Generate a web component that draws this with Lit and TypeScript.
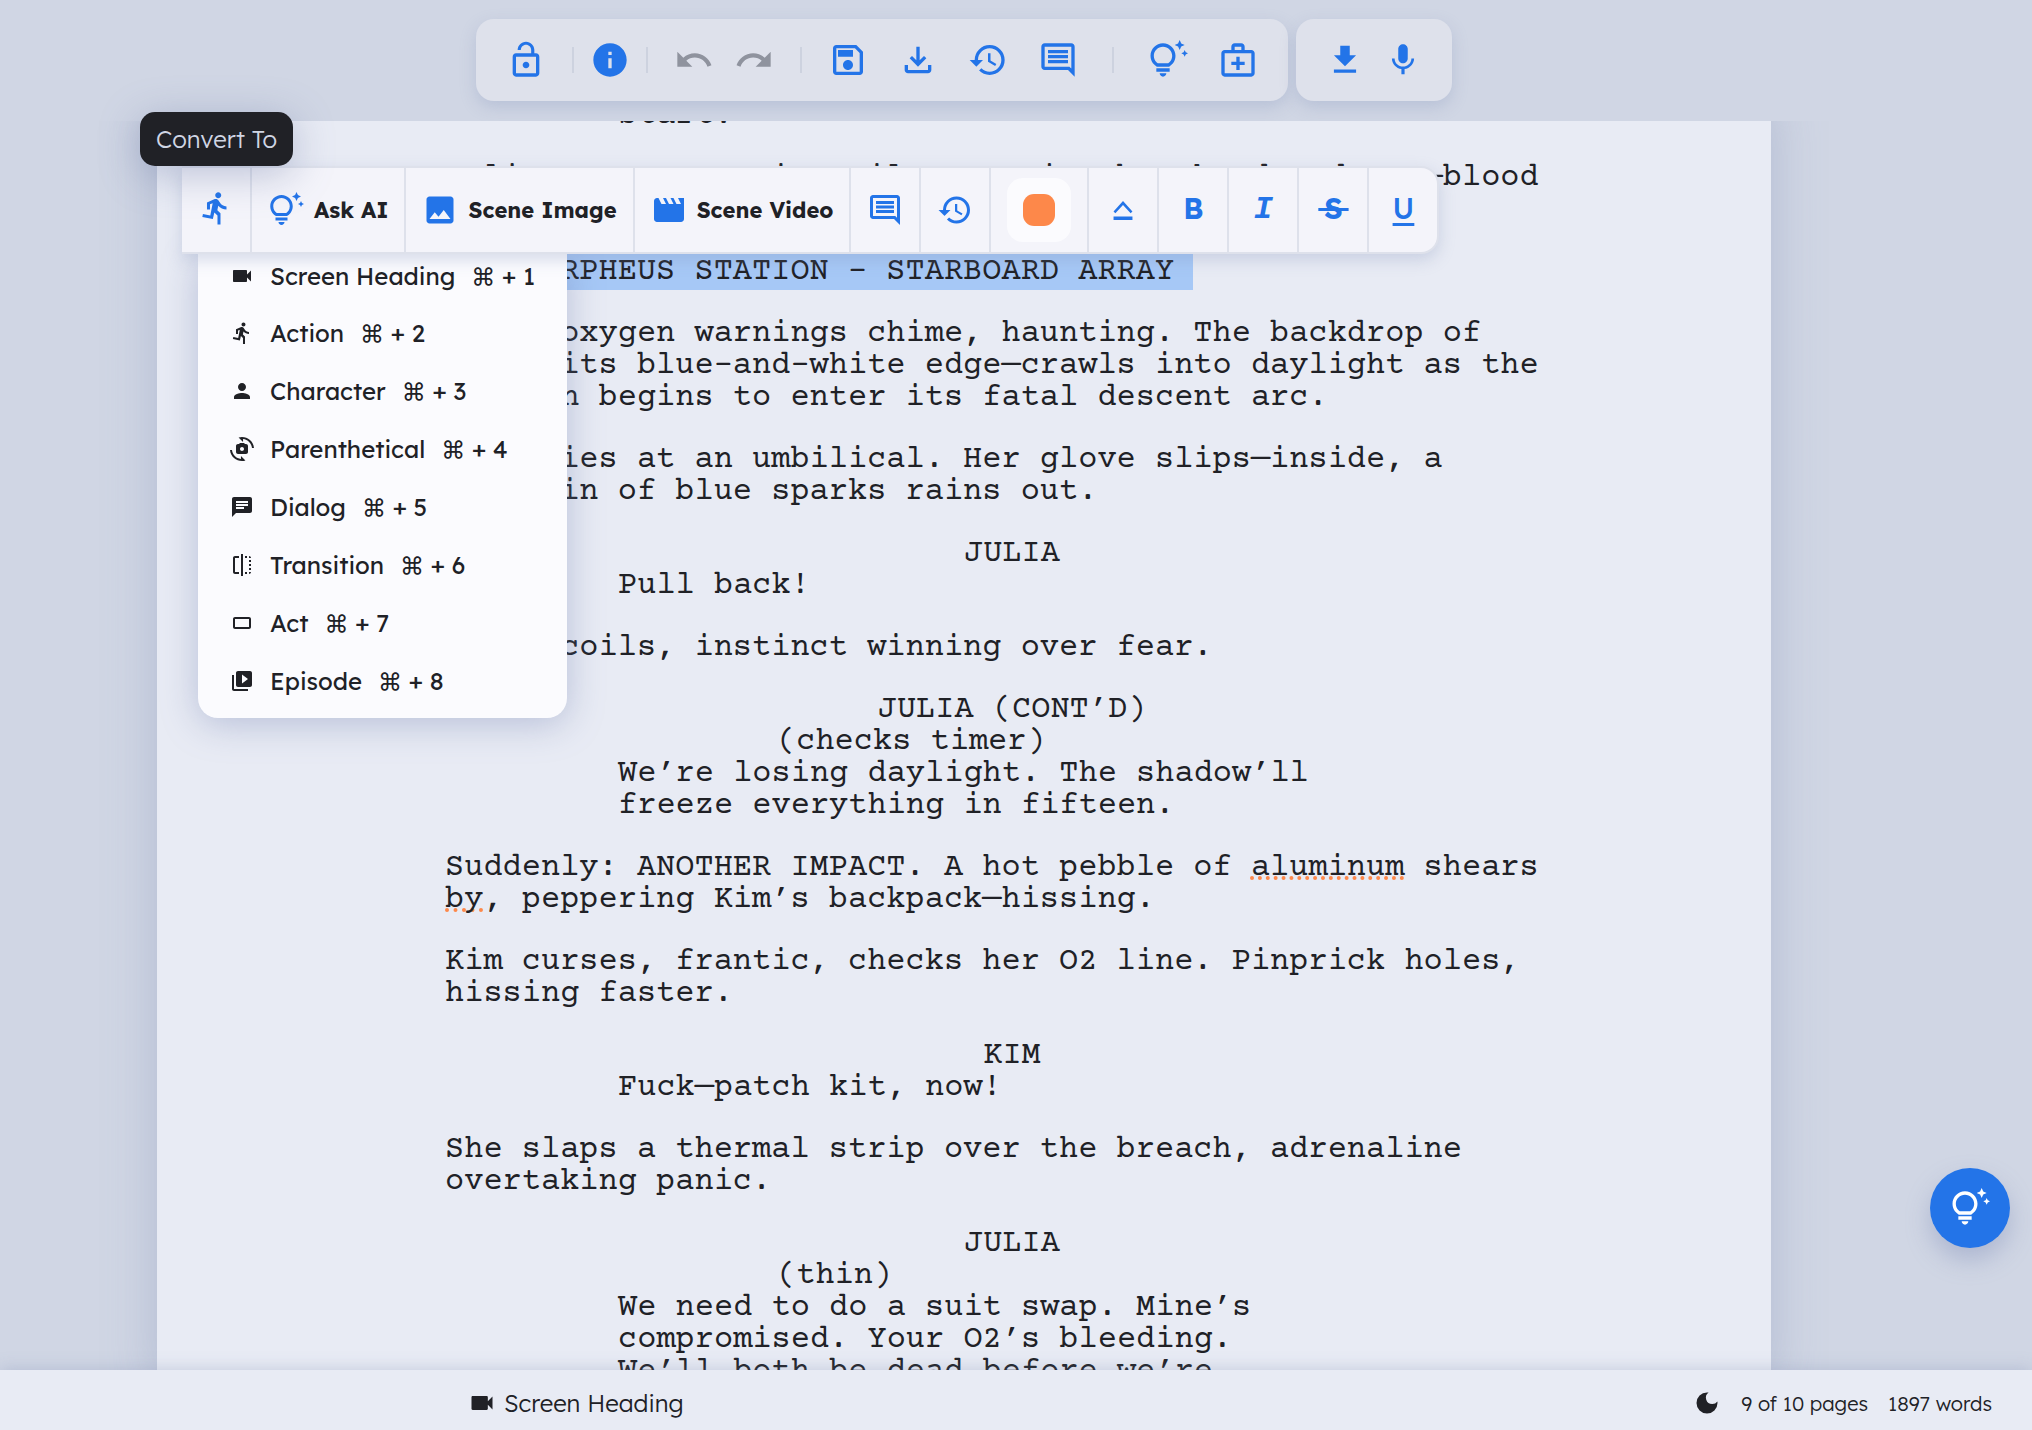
import { LitElement, html, css, svg, nothing } from "lit";
import { customElement, property, state } from "lit/decorators.js";

const ICONS: Record<string, string> = {
  lock: "M12 17c1.1 0 2-.9 2-2s-.9-2-2-2-2 .9-2 2 .9 2 2 2zm6-9h-1V6c0-2.76-2.24-5-5-5S7 3.24 7 6h1.9c0-1.71 1.39-3.1 3.1-3.1 1.71 0 3.1 1.39 3.1 3.1v2H6c-1.1 0-2 .9-2 2v10c0 1.1.9 2 2 2h12c1.1 0 2-.9 2-2V10c0-1.1-.9-2-2-2zm0 12H6V10h12v10z",
  info: "M12 2C6.48 2 2 6.48 2 12s4.48 10 10 10 10-4.48 10-10S17.52 2 12 2zm1 15h-2v-6h2v6zm0-8h-2V7h2v2z",
  undo: "M12.5 8c-2.65 0-5.05.99-6.9 2.6L2 7v9h9l-3.62-3.62c1.39-1.16 3.16-1.88 5.12-1.88 3.54 0 6.55 2.31 7.6 5.5l2.37-.78C21.08 11.03 17.15 8 12.5 8z",
  redo: "M18.4 10.6C16.55 8.99 14.15 8 11.5 8c-4.65 0-8.58 3.03-9.96 7.22L3.9 16c1.05-3.19 4.05-5.5 7.6-5.5 1.95 0 3.73.72 5.12 1.88L13 16h9V7l-3.6 3.6z",
  save: "M17 3H5c-1.11 0-2 .9-2 2v14c0 1.1.89 2 2 2h14c1.1 0 2-.9 2-2V7l-4-4zm2 16H5V5h11.17L19 7.83V19zm-7-7c-1.66 0-3 1.34-3 3s1.34 3 3 3 3-1.34 3-3-1.34-3-3-3zM6 6h9v4H6z",
  tray: "M12 16l-5-5 1.4-1.45 2.6 2.6V4h2v8.15l2.6-2.6L17 11l-5 5zM6 20c-.55 0-1.02-.2-1.41-.59C4.2 19.02 4 18.55 4 18v-3h2v3h12v-3h2v3c0 .55-.2 1.02-.59 1.41-.39.39-.86.59-1.41.59H6z",
  history: "M13 3a9 9 0 0 0-9 9H1l3.89 3.89.07.14L9 12H6c0-3.87 3.13-7 7-7s7 3.13 7 7-3.13 7-7 7c-1.93 0-3.68-.79-4.94-2.06l-1.42 1.42C8.27 19.99 10.51 21 13 21a9 9 0 0 0 0-18zm-1 5v5l4.28 2.54.72-1.21-3.5-2.08V8H12z",
  comment: "M21.99 4c0-1.1-.89-2-1.99-2H4c-1.1 0-2 .9-2 2v12c0 1.1.9 2 2 2h14l4 4-.01-18zM20 4v13.17L18.83 16H4V4h16zM6 12h12v2H6zm0-3h12v2H6zm0-3h12v2H6z",
  bulb: "M7 20h4c0 1.1-.9 2-2 2s-2-.9-2-2zm-2-1h8v-2H5v2zm11.5-9.5c0 3.82-2.66 5.86-3.77 6.5H5.27c-1.11-.64-3.77-2.68-3.77-6.5C1.5 5.36 4.86 2 9 2s7.5 3.36 7.5 7.5zm-2 0C14.5 6.47 12.03 4 9 4S3.5 6.47 3.5 9.5c0 2.47 1.49 3.89 2.35 4.5h6.3c.86-.61 2.35-2.03 2.35-4.5zm6.87-2.13L20 8l1.37.63L22 10l.63-1.37L24 8l-1.37-.63L22 6l-.63 1.37zM19 6l.94-2.06L22 3l-2.06-.94L19 0l-.94 2.06L16 3l2.06.94L19 6z",
  kit: "M20 6h-4V4c0-1.1-.9-2-2-2h-4c-1.1 0-2 .9-2 2v2H4c-1.1 0-2 .9-2 2v12c0 1.1.9 2 2 2h16c1.1 0 2-.9 2-2V8c0-1.1-.9-2-2-2zM10 4h4v2h-4V4zm10 16H4V8h16v12zM13 10h-2v3H8v2h3v3h2v-3h3v-2h-3z",
  download: "M19 9h-4V3H9v6H5l7 7 7-7zM5 18v2h14v-2H5z",
  mic: "M12 14c1.66 0 2.99-1.34 2.99-3L15 5c0-1.66-1.34-3-3-3S9 3.34 9 5v6c0 1.66 1.34 3 3 3zm5.3-3c0 3-2.54 5.1-5.3 5.1S6.7 14 6.7 11H5c0 3.41 2.72 6.23 6 6.72V21h2v-3.28c3.28-.48 6-3.3 6-6.72h-1.7z",
  run: "M13.49 5.48c1.1 0 2-.9 2-2s-.9-2-2-2-2 .9-2 2 .9 2 2 2zm-3.6 13.9l1-4.4 2.1 2v6h2v-7.5l-2.1-2 .6-3c1.3 1.5 3.3 2.5 5.5 2.5v-2c-1.9 0-3.5-1-4.3-2.4l-1-1.6c-.4-.6-1-1-1.7-1-.3 0-.5.1-.8.1l-5.2 2.2v4.7h2v-3.4l1.8-.7-1.6 8.1-4.9-1-.4 2 7 1.4z",
  image: "M21 19V5c0-1.1-.9-2-2-2H5c-1.1 0-2 .9-2 2v14c0 1.1.9 2 2 2h14c1.1 0 2-.9 2-2zM8.5 13.5l2.5 3.01L14.5 12l4.5 6H5l3.5-4.5z",
  movie: "M18 4l2 4h-3l-2-4h-2l2 4h-3l-2-4H8l2 4H7L5 4H4c-1.1 0-1.99.9-1.99 2L2 18c0 1.1.9 2 2 2h16c1.1 0 2-.9 2-2V4h-4z",
  caret: "M6.9 14.2L5.7 13l6.3-7 6.3 7-1.2 1.2L12 8.6zM5.7 16.4h12.6v2.2H5.7z",
  camera: "M17 10.5V7c0-.55-.45-1-1-1H4c-.55 0-1 .45-1 1v10c0 .55.45 1 1 1h12c.55 0 1-.45 1-1v-3.5l4 4v-11l-4 4z",
  person: "M12 12c2.21 0 4-1.79 4-4s-1.79-4-4-4-4 1.79-4 4 1.79 4 4 4zm0 2c-2.67 0-8 1.34-8 4v2h16v-2c0-2.66-5.33-4-8-4z",
  switch: "M16 7h-1l-1-1h-4L9 7H8c-1.1 0-2 .9-2 2v6c0 1.1.9 2 2 2h8c1.1 0 2-.9 2-2V9c0-1.1-.9-2-2-2zm-4 7c-1.1 0-2-.9-2-2s.9-2 2-2 2 .9 2 2-.9 2-2 2zM8.57.51l4.48 4.48V2.04c4.72.47 8.48 4.23 8.95 8.95h2C23.34 3.02 15.49-1.59 8.57.51zM10.95 21.96C6.23 21.49 2.47 17.73 2 13.01H0c.66 7.97 8.51 12.58 15.43 10.48l-4.48-4.48v2.95z",
  chat: "M20 2H4c-1.1 0-1.99.9-1.99 2L2 22l4-4h14c1.1 0 2-.9 2-2V4c0-1.1-.9-2-2-2zM6 9h12v2H6V9zm8 5H6v-2h8v2zm4-6H6V6h12v2z",
  flip: "M15 21h2v-2h-2v2zm4-12h2V7h-2v2zM3 5v14c0 1.1.9 2 2 2h4v-2H5V5h4V3H5c-1.1 0-2 .9-2 2zm16-2v2h2c0-1.1-.9-2-2-2zm-8 20h2V1h-2v22zm8-6h2v-2h-2v2zM15 5h2V3h-2v2zm4 8h2v-2h-2v2zm0 8c1.1 0 2-.9 2-2h-2v2z",
  frame: "M19 6H5c-1.1 0-2 .9-2 2v8c0 1.1.9 2 2 2h14c1.1 0 2-.9 2-2V8c0-1.1-.9-2-2-2zm0 10H5V8h14v8z",
  episode: "M4 6H2v14c0 1.1.9 2 2 2h14v-2H4V6zm16-4H8c-1.1 0-2 .9-2 2v12c0 1.1.9 2 2 2h12c1.1 0 2-.9 2-2V4c0-1.1-.9-2-2-2zm-8 12.5v-9l6 4.5-6 4.5z",
  moon: "M12 3a9 9 0 1 0 9 9c0-.46-.04-.92-.1-1.36a5.39 5.39 0 0 1-4.4 2.26 5.4 5.4 0 0 1-3.14-9.8c-.44-.06-.9-.1-1.36-.1z",
};

@customElement("ui-icon")
export class UiIcon extends LitElement {
  @property() name = "";
  static styles = css`
    :host { display: block; flex: none; width: var(--icon-size, 24px); height: var(--icon-size, 24px); }
    svg { display: block; width: 100%; height: 100%; fill: currentColor; fill-rule: evenodd; }
  `;
  render() {
    return html`<svg viewBox="0 0 24 24" aria-hidden="true">${svg`<path d=${ICONS[this.name] ?? ""}></path>`}</svg>`;
  }
}

@customElement("top-bar")
export class TopBar extends LitElement {
  static styles = css`
    :host { display: flex; justify-content: center; gap: 8px; }
    .group {
      display: flex; align-items: center; height: 82px; padding: 0 15px; box-sizing: border-box;
      border-radius: 18px; background: #dee1eb; box-shadow: 0 6px 16px rgba(130, 145, 185, 0.3);
      --icon-size: 40px;
    }
    .group.side { padding: 0 20px; --icon-size: 38px; }
    .history { display: flex; padding: 0 5px; }
    button {
      display: flex; align-items: center; justify-content: center; width: 70px; height: 60px;
      padding: 0; border: 0; background: none; color: #2374e8; cursor: pointer;
    }
    button.mid { width: 60px; }
    button.near { width: 58px; }
    button.tight { width: 50px; }
    button:disabled { color: #8f939e; }
    .sep { width: 2px; height: 26px; margin: 0 11px; background: #cdd2df; }
    .sep.wide { margin: 0 19px; }
  `;
  private btn(icon: string, label: string, cls = "", disabled = false) {
    return html`<button class=${cls} aria-label=${label} ?disabled=${disabled}><ui-icon name=${icon}></ui-icon></button>`;
  }
  render() {
    return html`
      <div class="group" role="toolbar" aria-label="Document">
        ${this.btn("lock", "Unlock")}
        <span class="sep"></span>
        ${this.btn("info", "Info", "tight")}
        <span class="sep"></span>
        <div class="history">${this.btn("undo", "Undo", "mid", true)}${this.btn("redo", "Redo", "mid", true)}</div>
        <span class="sep"></span>
        ${this.btn("save", "Save")}${this.btn("tray", "Import")}${this.btn("history", "History")}${this.btn("comment", "Comments")}
        <span class="sep wide"></span>
        ${this.btn("bulb", "Ideas")}${this.btn("kit", "Script doctor")}
      </div>
      <div class="group side" role="toolbar" aria-label="Output">
        ${this.btn("download", "Download", "near")}${this.btn("mic", "Dictate", "near")}
      </div>
    `;
  }
}

const KINDS: [string, string][] = [
  ["camera", "Screen Heading"],
  ["run", "Action"],
  ["person", "Character"],
  ["switch", "Parenthetical"],
  ["chat", "Dialog"],
  ["flip", "Transition"],
  ["frame", "Act"],
  ["episode", "Episode"],
];

@customElement("format-bar")
export class FormatBar extends LitElement {
  @state() private open = true;
  static styles = css`
    :host { display: block; font-family: Lexend, Inter, "Open Sans", sans-serif; }
    .bar {
      position: relative; z-index: 2; display: flex; height: 84px; border: 2px solid #dee1eb;
      border-left: 0; border-radius: 0 18px 18px 0;
      background: #f4f4fa; box-shadow: 0 6px 16px rgba(130, 145, 185, 0.3); --icon-size: 36px;
    }
    button { font: inherit; cursor: pointer; border: 0; background: none; }
    .cell {
      display: flex; align-items: center; justify-content: center; gap: 10px; padding: 0 16px;
      border-right: 2px solid #dee1eb; color: #2374e8;
    }
    .cell.raised { padding-bottom: 4px; }
    .cell:last-child { border-right: 0; }
    .label { color: #202126; font-size: 22px; font-weight: 700; white-space: nowrap; }
    .chip { display: flex; padding: 16px; border-radius: 16px; background: #fbfbfe; }
    .dot { width: 32px; height: 32px; border-radius: 11px; background: #fd884a; }
    .glyph { width: 36px; font-size: 29px; line-height: 36px; font-weight: 700; text-align: center; white-space: nowrap; }
    .italic { font-family: "Liberation Mono", monospace; font-style: italic; font-size: 32px; }
    .strike { text-decoration: line-through; text-decoration-thickness: 3px; }
    .under { font-weight: 500; text-decoration: underline; text-decoration-thickness: 3px; text-underline-offset: 4px; }
    .tip {
      position: absolute; z-index: 3; left: -42px; bottom: 100%; padding: 12px 16px;
      border-radius: 15px; background: #202126; color: #d0d6e4; font-size: 24px; line-height: 30px; font-weight: 300;
      white-space: nowrap; box-shadow: 0 8px 40px rgba(100, 115, 160, 0.4);
    }
    .menu {
      position: absolute; z-index: 1; left: 16px; top: 100%; margin: 0; padding: 0 0 8px; list-style: none;
      width: 369px; border-radius: 0 0 20px 20px; background: #fbfbfe;
      box-shadow: 0 6px 36px rgba(110, 125, 175, 0.4);
    }
    .item {
      display: flex; align-items: center; gap: 16px; width: 100%; height: 58px; padding: 0 32px;
      color: #202126; font-size: 24px; text-align: left; white-space: nowrap;
    }
    .menu li:first-child .item { height: 50px; padding-bottom: 6px; }
  `;
  private cell(icon: string, label: string, text = "") {
    return html`<button class="cell" aria-label=${label}>
      <ui-icon name=${icon}></ui-icon>${text ? html`<span class="label">${text}</span>` : nothing}
    </button>`;
  }
  render() {
    return html`
      <div class="tip" role="tooltip">Convert To</div>
      <div class="bar" role="toolbar" aria-label="Formatting">
        <button class="cell raised" aria-label="Convert To" aria-expanded=${this.open} @click=${() => (this.open = !this.open)}>
          <ui-icon name="run"></ui-icon>
        </button>
        ${this.cell("bulb", "Ask AI", "Ask AI")}
        ${this.cell("image", "Scene Image", "Scene Image")}
        ${this.cell("movie", "Scene Video", "Scene Video")}
        ${this.cell("comment", "Comment")}
        ${this.cell("history", "History")}
        <button class="cell" aria-label="Text color"><span class="chip"><span class="dot"></span></span></button>
        ${this.cell("caret", "Change case")}
        <button class="cell raised" aria-label="Bold"><span class="glyph">B</span></button>
        <button class="cell" aria-label="Italic"><span class="glyph italic">I</span></button>
        <button class="cell raised" aria-label="Strikethrough"><span class="glyph strike">&#8201;S&#8201;</span></button>
        <button class="cell raised" aria-label="Underline"><span class="glyph under">U</span></button>
      </div>
      ${this.open
        ? html`<ul class="menu">
            ${KINDS.map(
              ([icon, name], i) => html`<li>
                <button class="item"><ui-icon name=${icon}></ui-icon><span>${name}</span><span>⌘ + ${i + 1}</span></button>
              </li>`
            )}
          </ul>`
        : nothing}
    `;
  }
}

type Kind = "action" | "dialog" | "paren" | "cue" | "heading";
const SCRIPT: [Kind, unknown][] = [
  ["dialog", "start."],
  ["action", "saline O2 seeps via veils raw mist by the dread now—blood\nbeads in zero gravity."],
  ["heading", "EXT. ORPHEUS STATION – STARBOARD ARRAY "],
  ["action", "Faint oxygen warnings chime, haunting. The backdrop of\nEarth—its blue-and-white edge—crawls into daylight as the\nstation begins to enter its fatal descent arc."],
  ["action", "Kim plies at an umbilical. Her glove slips—inside, a\nfountain of blue sparks rains out."],
  ["cue", "JULIA"],
  ["dialog", "Pull back!"],
  ["action", "Kim recoils, instinct winning over fear."],
  ["cue", "JULIA (CONT’D)"],
  ["paren", "(checks timer)"],
  ["dialog", "We’re losing daylight. The shadow’ll\nfreeze everything in fifteen."],
  ["action", html`Suddenly: ANOTHER IMPACT. A hot pebble of <span class="typo">aluminum</span> shears<br /><span class="typo">by</span>, peppering Kim’s backpack—hissing.`],
  ["action", "Kim curses, frantic, checks her O2 line. Pinprick holes,\nhissing faster."],
  ["cue", "KIM"],
  ["dialog", "Fuck—patch kit, now!"],
  ["action", "She slaps a thermal strip over the breach, adrenaline\novertaking panic."],
  ["cue", "JULIA"],
  ["paren", "(thin)"],
  ["dialog", "We need to do a suit swap. Mine’s\ncompromised. Your O2’s bleeding.\nWe’ll both be dead before we’re"],
];

@customElement("script-page")
export class ScriptPage extends LitElement {
  static styles = css`
    :host {
      display: block; margin: 0 157px; padding: 0 192px 0 288px; background: #e8ebf4; color: #202126;
      box-shadow: 0 0 48px rgba(120, 135, 175, 0.35);
      font: 32px/32px "Courier Prime", "Liberation Mono", monospace;
    }
    .sheet { margin-top: -21px; }
    p { margin: 0; white-space: pre-line; }
    .action, .heading, .cue { padding-top: 30px; }
    .heading { white-space: pre; }
    .dialog { margin-left: 173px; }
    .paren { margin-left: 332px; }
    .cue { text-align: center; }
    .mark { display: inline-block; height: 36px; margin: -2px 0; line-height: 36px; background: #a6c8f6; }
    .typo { text-decoration: underline dotted #fd884a 4px; text-underline-offset: 1px; text-decoration-skip-ink: none; }
  `;
  render() {
    return html`<article class="sheet">
      ${SCRIPT.map(([kind, text]) => html`<p class=${kind}>${kind === "heading" ? html`<span class="mark">${text}</span>` : text}</p>`)}
    </article>`;
  }
}

@customElement("app-root")
export class AppRoot extends LitElement {
  static styles = css`
    :host {
      display: flex; flex-direction: column; height: 100vh; overflow: hidden; background: #d0d6e4; color: #202126;
      font-family: Lexend, Inter, "Open Sans", sans-serif;
    }
    header { flex: none; padding: 19px 104px 20px 0; }
    .stage { position: relative; flex: 1; min-height: 0; }
    .scroll { height: 100%; padding-right: 104px; box-sizing: border-box; overflow: hidden; }
    .float { position: absolute; left: 182px; top: 45px; }
    .fab {
      position: absolute; right: 22px; bottom: 122px; display: flex; align-items: center; justify-content: center;
      width: 80px; height: 80px; padding: 0; border: 0; border-radius: 50%; background: #2374e8; color: #fff;
      box-shadow: 0 12px 24px rgba(120, 135, 180, 0.4); --icon-size: 40px; cursor: pointer;
    }
    footer {
      position: relative; flex: none; display: flex; align-items: center; height: 60px; padding: 6px 40px 0 468px; box-sizing: border-box;
      background: #e8ebf4; font-weight: 300; box-shadow: 0 0 16px rgba(120, 135, 175, 0.35); --icon-size: 28px;
    }
    .kind { display: flex; align-items: center; gap: 8px; font-size: 24px; }
    .stats { display: flex; align-items: center; gap: 20px; margin-left: auto; font-size: 20px; }
    .theme { display: flex; padding: 0; border: 0; background: none; color: inherit; cursor: pointer; }
  `;
  render() {
    return html`
      <header><top-bar></top-bar></header>
      <main class="stage">
        <div class="scroll"><script-page></script-page></div>
        <format-bar class="float"></format-bar>
        <button class="fab" aria-label="Ask AI"><ui-icon name="bulb"></ui-icon></button>
      </main>
      <footer>
        <div class="kind"><ui-icon name="camera"></ui-icon><span>Screen Heading</span></div>
        <div class="stats">
          <button class="theme" aria-label="Dark mode"><ui-icon name="moon"></ui-icon></button>
          <span>9 of 10 pages</span><span>1897 words</span>
        </div>
      </footer>
    `;
  }
}
